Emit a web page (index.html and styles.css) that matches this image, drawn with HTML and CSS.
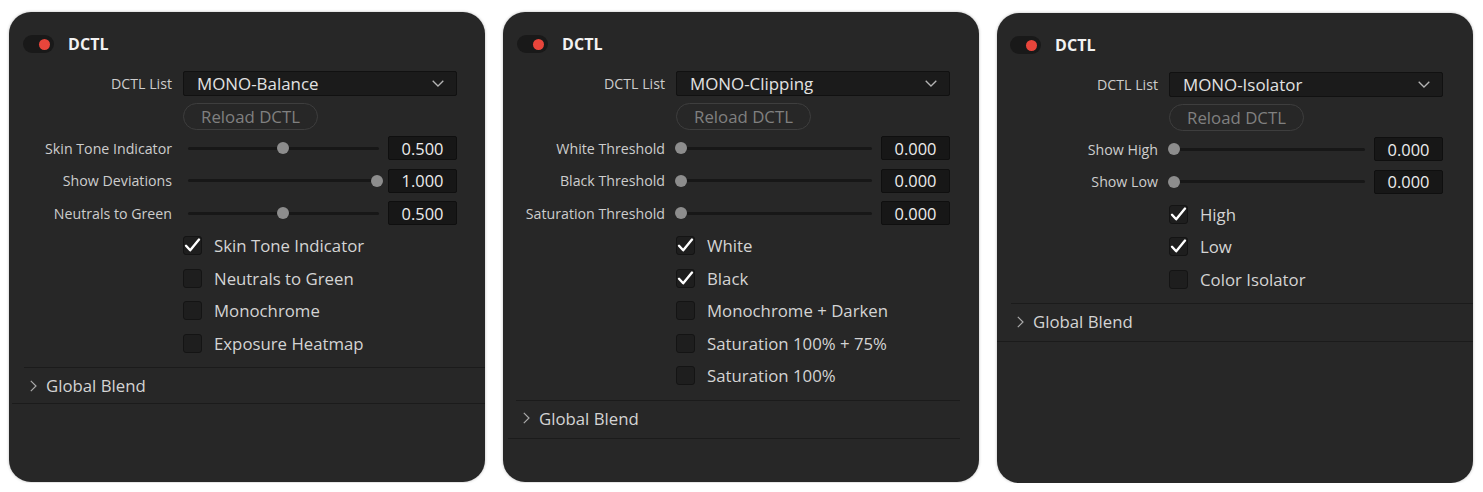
FILE: index.html
```html
<!DOCTYPE html>
<html>
<head>
<meta charset="utf-8">
<title>DCTL panels</title>
<link rel="stylesheet" href="styles.css">
</head>
<body>
<div class="panels">

  <section class="panel p1">
    <header class="head"><span class="toggle"><span class="dot"></span></span><span class="title">DCTL</span></header>
    <div class="row list-row"><span class="label">DCTL List</span><div class="select"><span>MONO-Balance</span><svg class="caret" width="12" height="7" viewBox="0 0 12 7"><polyline points="0.7,0.7 6,6 11.3,0.7" fill="none" stroke="#b4b4b4" stroke-width="1.3"/></svg></div></div>
    <div class="row reload-row"><span></span><div><button class="reload">Reload DCTL</button></div></div>
    <div class="rows">
      <div class="row"><span class="label">Skin Tone Indicator</span><div class="ctrl"><div class="track"><span class="knob" style="--v:0.5"></span></div><span class="value">0.500</span></div></div>
      <div class="row"><span class="label">Show Deviations</span><div class="ctrl"><div class="track"><span class="knob" style="--v:1"></span></div><span class="value">1.000</span></div></div>
      <div class="row"><span class="label">Neutrals to Green</span><div class="ctrl"><div class="track"><span class="knob" style="--v:0.5"></span></div><span class="value">0.500</span></div></div>
      <div class="row"><span></span><div class="check"><span class="box"><svg width="19" height="19" viewBox="0 0 19 19"><path d="M3 9.8 L7.2 14.3 L16 3.6" fill="none" stroke="#fff" stroke-width="2.4" stroke-linecap="round" stroke-linejoin="round"/></svg></span><span class="clabel">Skin Tone Indicator</span></div></div>
      <div class="row"><span></span><div class="check"><span class="box"></span><span class="clabel">Neutrals to Green</span></div></div>
      <div class="row"><span></span><div class="check"><span class="box"></span><span class="clabel">Monochrome</span></div></div>
      <div class="row"><span></span><div class="check"><span class="box"></span><span class="clabel">Exposure Heatmap</span></div></div>
    </div>
    <div class="sep sep1"></div>
    <div class="blend"><svg width="7" height="12" viewBox="0 0 7 12"><polyline points="0.8,0.8 6,6 0.8,11.2" fill="none" stroke="#a8a8a8" stroke-width="1.2"/></svg><span>Global Blend</span></div>
    <div class="sep sep2"></div>
  </section>

  <section class="panel p2">
    <header class="head"><span class="toggle"><span class="dot"></span></span><span class="title">DCTL</span></header>
    <div class="row list-row"><span class="label">DCTL List</span><div class="select"><span>MONO-Clipping</span><svg class="caret" width="12" height="7" viewBox="0 0 12 7"><polyline points="0.7,0.7 6,6 11.3,0.7" fill="none" stroke="#b4b4b4" stroke-width="1.3"/></svg></div></div>
    <div class="row reload-row"><span></span><div><button class="reload">Reload DCTL</button></div></div>
    <div class="rows">
      <div class="row"><span class="label">White Threshold</span><div class="ctrl"><div class="track"><span class="knob" style="--v:0"></span></div><span class="value">0.000</span></div></div>
      <div class="row"><span class="label">Black Threshold</span><div class="ctrl"><div class="track"><span class="knob" style="--v:0"></span></div><span class="value">0.000</span></div></div>
      <div class="row"><span class="label">Saturation Threshold</span><div class="ctrl"><div class="track"><span class="knob" style="--v:0"></span></div><span class="value">0.000</span></div></div>
      <div class="row"><span></span><div class="check"><span class="box"><svg width="19" height="19" viewBox="0 0 19 19"><path d="M3 9.8 L7.2 14.3 L16 3.6" fill="none" stroke="#fff" stroke-width="2.4" stroke-linecap="round" stroke-linejoin="round"/></svg></span><span class="clabel">White</span></div></div>
      <div class="row"><span></span><div class="check"><span class="box"><svg width="19" height="19" viewBox="0 0 19 19"><path d="M3 9.8 L7.2 14.3 L16 3.6" fill="none" stroke="#fff" stroke-width="2.4" stroke-linecap="round" stroke-linejoin="round"/></svg></span><span class="clabel">Black</span></div></div>
      <div class="row"><span></span><div class="check"><span class="box"></span><span class="clabel">Monochrome + Darken</span></div></div>
      <div class="row"><span></span><div class="check"><span class="box"></span><span class="clabel">Saturation 100% + 75%</span></div></div>
      <div class="row"><span></span><div class="check"><span class="box"></span><span class="clabel">Saturation 100%</span></div></div>
    </div>
    <div class="sep sep1"></div>
    <div class="blend"><svg width="7" height="12" viewBox="0 0 7 12"><polyline points="0.8,0.8 6,6 0.8,11.2" fill="none" stroke="#a8a8a8" stroke-width="1.2"/></svg><span>Global Blend</span></div>
    <div class="sep sep2"></div>
  </section>

  <section class="panel p3">
    <header class="head"><span class="toggle"><span class="dot"></span></span><span class="title">DCTL</span></header>
    <div class="row list-row"><span class="label">DCTL List</span><div class="select"><span>MONO-Isolator</span><svg class="caret" width="12" height="7" viewBox="0 0 12 7"><polyline points="0.7,0.7 6,6 11.3,0.7" fill="none" stroke="#b4b4b4" stroke-width="1.3"/></svg></div></div>
    <div class="row reload-row"><span></span><div><button class="reload">Reload DCTL</button></div></div>
    <div class="rows">
      <div class="row"><span class="label">Show High</span><div class="ctrl"><div class="track"><span class="knob" style="--v:0"></span></div><span class="value">0.000</span></div></div>
      <div class="row"><span class="label">Show Low</span><div class="ctrl"><div class="track"><span class="knob" style="--v:0"></span></div><span class="value">0.000</span></div></div>
      <div class="row"><span></span><div class="check"><span class="box"><svg width="19" height="19" viewBox="0 0 19 19"><path d="M3 9.8 L7.2 14.3 L16 3.6" fill="none" stroke="#fff" stroke-width="2.4" stroke-linecap="round" stroke-linejoin="round"/></svg></span><span class="clabel">High</span></div></div>
      <div class="row"><span></span><div class="check"><span class="box"><svg width="19" height="19" viewBox="0 0 19 19"><path d="M3 9.8 L7.2 14.3 L16 3.6" fill="none" stroke="#fff" stroke-width="2.4" stroke-linecap="round" stroke-linejoin="round"/></svg></span><span class="clabel">Low</span></div></div>
      <div class="row"><span></span><div class="check"><span class="box"></span><span class="clabel">Color Isolator</span></div></div>
    </div>
    <div class="sep sep1"></div>
    <div class="blend"><svg width="7" height="12" viewBox="0 0 7 12"><polyline points="0.8,0.8 6,6 0.8,11.2" fill="none" stroke="#a8a8a8" stroke-width="1.2"/></svg><span>Global Blend</span></div>
    <div class="sep sep2"></div>
  </section>

</div>
</body>
</html>
```

FILE: styles.css
```css
* { box-sizing: border-box; }

html, body {
  margin: 0;
  background: #ffffff;
}

body {
  font-family: "Open Sans", "Noto Sans", "DejaVu Sans", sans-serif;
  color: #d2d2d2;
}

.panels {
  display: flex;
  align-items: flex-start;
  gap: 18px;
  padding: 12px 0 0 9px;
}

.panel {
  width: 476px;
  height: 470px;
  background: #272727;
  border-radius: 22px;
  box-shadow: 0 0 3px rgba(0, 0, 0, 0.28);
  display: flex;
  flex-direction: column;
  overflow: hidden;
}

.p3 { margin-top: 1px; }

.head {
  display: flex;
  align-items: center;
  height: 18px;
  margin-top: 23px;
  padding-left: 14px;
  gap: 14px;
}

.p3 .head { padding-left: 13px; }

.toggle {
  width: 31px;
  height: 18px;
  border-radius: 9px;
  background: #191919;
  display: flex;
  align-items: center;
  justify-content: flex-end;
  padding-right: 4px;
}

.dot {
  width: 11px;
  height: 11px;
  border-radius: 50%;
  background: #e8453b;
}

.title {
  font-size: 16px;
  font-weight: 700;
  color: #f2f2f2;
  letter-spacing: 0.1px;
}

.row {
  display: grid;
  grid-template-columns: 163px 1fr;
  column-gap: 11px;
  align-items: center;
  height: 32.5px;
}

.p2 .row { grid-template-columns: 162px 1fr; }
.p3 .row { grid-template-columns: 161px 1fr; }

.label {
  text-align: right;
  font-size: 14.2px;
  color: #cdcdcd;
  white-space: nowrap;
}

.list-row {
  margin-top: 18px;
  height: 25px;
}

.select {
  width: 274px;
  height: 25px;
  background: #1b1b1b;
  border: 1px solid #111111;
  border-radius: 2px;
  display: flex;
  align-items: center;
  justify-content: space-between;
  padding: 0 12px 0 13px;
  font-size: 16.9px;
  color: #e2e2e2;
}

.reload-row {
  margin-top: 7px;
  height: 27px;
}

.reload {
  width: 135px;
  height: 27px;
  border-radius: 14px;
  border: 1px solid #3e3e3e;
  background: transparent;
  color: #808080;
  font-family: inherit;
  font-size: 16.8px;
  padding: 0;
}

.rows {
  margin-top: 2px;
  display: flex;
  flex-direction: column;
}

.ctrl {
  display: flex;
  align-items: center;
}

.track {
  position: relative;
  width: 191px;
  height: 3px;
  margin-left: 5px;
  background: #171717;
  border-radius: 2px;
}

.knob {
  position: absolute;
  top: -4.5px;
  left: calc(var(--v) * 189px - 6px);
  width: 12px;
  height: 12px;
  border-radius: 50%;
  background: #8d8d8d;
}

.value {
  margin-left: 9px;
  width: 69px;
  height: 24px;
  background: #171717;
  border: 1px solid #0f0f0f;
  border-radius: 2px;
  display: flex;
  align-items: center;
  justify-content: center;
  font-size: 16.4px;
  color: #ececec;
}

.check {
  display: flex;
  align-items: center;
  gap: 12px;
}

.box {
  width: 19px;
  height: 19px;
  background: #1e1e1e;
  border: 1px solid #141414;
  border-radius: 3px;
  position: relative;
  flex: none;
}

.box svg {
  position: absolute;
  left: -1px;
  top: -1px;
}

.clabel {
  font-size: 16.8px;
  color: #d4d4d4;
  white-space: nowrap;
}

.sep {
  height: 1px;
  background: #1b1b1b;
  flex: none;
}

.sep1 { margin-top: 7.5px; }

.p1 .sep1 { margin-left: 15px; }
.p1 .sep2 { margin-left: 3px; }
.p2 .sep1 { margin-left: 13px; margin-right: 19px; }
.p2 .sep2 { margin-left: 5px; margin-right: 19px; }
.p3 .sep1 { margin-left: 14px; }

.blend {
  height: 35px;
  display: flex;
  align-items: center;
  gap: 9px;
  padding-left: 21px;
  font-size: 16.8px;
  color: #d4d4d4;
}

.p2 .blend { height: 37px; padding-left: 20px; }
.p3 .blend { height: 37px; padding-left: 20px; }
.p2 .blend span, .p2 .blend svg,
.p3 .blend span, .p3 .blend svg { margin-top: -2px; }
```
